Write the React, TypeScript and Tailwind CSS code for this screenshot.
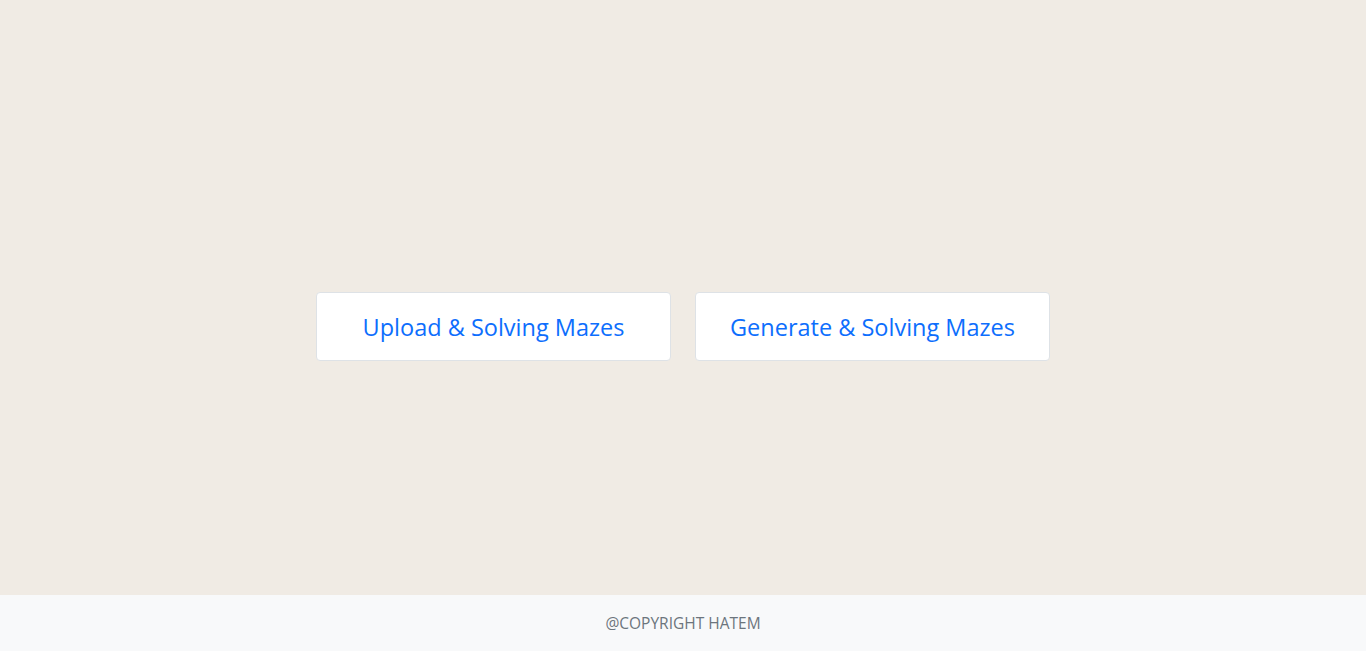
export default function App() {
  return (
    <div className="flex h-[651px] flex-col bg-[#f0ebe4] font-['Open_Sans',sans-serif]">
      <main className="flex flex-1 items-center justify-center gap-6 pt-[57px]">
        <button className="h-[69px] w-[355px] rounded border border-[#dee2e6] bg-white pt-1 text-[23.5px] text-[#0d6efd]">
          Upload &amp; Solving Mazes
        </button>
        <button className="h-[69px] w-[355px] rounded border border-[#dee2e6] bg-white pt-1 text-[23.5px] text-[#0d6efd]">
          Generate &amp; Solving Mazes
        </button>
      </main>
      <footer className="flex h-[56px] items-center justify-center bg-[#f8f9fa] pt-0.5 text-[15.5px] text-[#6c757d]">
        @COPYRIGHT HATEM
      </footer>
    </div>
  );
}
